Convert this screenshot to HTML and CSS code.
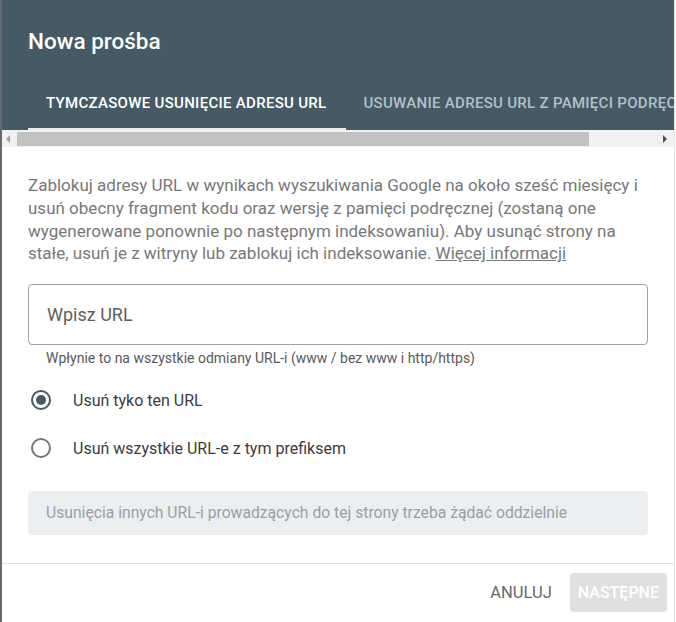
FILE: index.html
```html
<!DOCTYPE html>
<html lang="pl">
<head>
    <meta charset="UTF-8">
    <meta name="viewport" content="width=device-width, initial-scale=1.0">
    <title>Nowa prośba</title>
    <link rel="stylesheet" href="styles.css">
</head>
<body>

    <div class="dialog">
        <div class="header">
            <h1>Nowa prośba</h1>
            <div class="tabs">
                <div class="tab active">Tymczasowe usunięcie adresu URL</div>
                <div class="tab">Usuwanie adresu URL z pamięci podręcznej</div>
            </div>
        </div>

        <!-- horizontal scrollbar under the tabs -->
        <div class="scrollbar">
            <span class="arrow left"></span>
            <div class="track"><div class="thumb"></div></div>
            <span class="arrow right"></span>
        </div>

        <div class="content">
            <p class="intro">Zablokuj adresy URL w wynikach wyszukiwania Google na około sześć miesięcy i usuń obecny fragment kodu oraz wersję z pamięci podręcznej (zostaną one wygenerowane ponownie po następnym indeksowaniu). Aby usunąć strony na stałe, usuń je z witryny lub zablokuj ich indeksowanie. <a href="#">Więcej informacji</a></p>

            <div class="field">
                <input type="text" placeholder="Wpisz URL">
            </div>
            <div class="hint">Wpłynie to na wszystkie odmiany URL-i (www / bez www i http/https)</div>

            <div class="options">
                <label class="radio checked"><span class="circle"></span>Usuń tyko ten URL</label>
                <label class="radio"><span class="circle"></span>Usuń wszystkie URL-e z tym prefiksem</label>
            </div>

            <div class="note">Usunięcia innych URL-i prowadzących do tej strony trzeba żądać oddzielnie</div>
        </div>

        <div class="footer">
            <button class="cancel">Anuluj</button>
            <button class="next" disabled>Następne</button>
        </div>
    </div>

</body>
</html>
```

FILE: styles.css
```css
body {
    margin: 0;
    font-family: Roboto, "Noto Sans", sans-serif;
    background: #fff;
    overflow: hidden;
}
.dialog {
    height: 622px;
    border-left: 2px solid #65686e;
    border-right: 1px solid #e3e3e3;
    margin-right: 1px;
    display: flex;
    flex-direction: column;
    box-sizing: border-box;
}
.header {
    background: #455a64;
    color: #fff;
}
h1 {
    margin: 0;
    height: 80px;
    padding-left: 26px;
    font-size: 22.5px;
    font-weight: 500;
    line-height: 82px;
}
.tabs {
    display: flex;
    height: 50px;
    padding-left: 26px;
    overflow: hidden;
    white-space: nowrap;
}
.tab {
    flex: none;
    padding: 0 19px 0 18px;
    font-size: 15px;
    font-weight: 500;
    letter-spacing: 0.3px;
    text-transform: uppercase;
    line-height: 46px;
    color: #b4c0c6;
    border-bottom: 2px solid transparent;
}
.tab.active {
    color: #fff;
    border-bottom-color: #e8ecee;
}
.scrollbar {
    display: flex;
    align-items: center;
    height: 18px;
    background: #f1f1f1;
}
.arrow {
    width: 0;
    height: 0;
    border-top: 4px solid transparent;
    border-bottom: 4px solid transparent;
}
.arrow.left {
    border-right: 4px solid #a3a3a3;
    margin: 0 7px 0 4px;
}
.arrow.right {
    border-left: 4px solid #505050;
    margin: 0 7px 0 4px;
}
.track {
    flex: 1;
    height: 14px;
    margin-right: 2px;
}
.thumb {
    width: 572px;
    height: 100%;
    background: #c1c1c1;
}
.content {
    flex: 1;
    padding: 27px 26px 28px;
    border-bottom: 1px solid #e0e0e0;
}
.intro {
    margin: 0;
    font-size: 17px;
    line-height: 22.7px;
    color: #787878;
}
.intro a {
    color: #787878;
}
.field input {
    display: block;
    width: 100%;
    box-sizing: border-box;
    height: 61px;
    margin-top: 19px;
    padding: 0 18px;
    border: 1px solid #a0a0a0;
    border-radius: 4px;
    font-family: inherit;
    font-size: 18px;
    outline: none;
}
.field input::placeholder {
    color: #5f5f5f;
}
.hint {
    padding-left: 18px;
    margin-top: 4px;
    font-size: 14px;
    line-height: 18px;
    color: #5a5a5a;
}
.options {
    margin-top: 9px;
}
.radio {
    display: flex;
    align-items: center;
    height: 48px;
    font-size: 16px;
    color: #3c3c3c;
}
.circle {
    width: 16px;
    height: 16px;
    border: 2px solid #757575;
    border-radius: 50%;
    margin: 0 22px 0 3px;
    box-sizing: content-box;
    position: relative;
}
.radio.checked .circle {
    border-color: #455a64;
}
.radio.checked .circle::after {
    content: "";
    position: absolute;
    top: 3px;
    left: 3px;
    width: 10px;
    height: 10px;
    border-radius: 50%;
    background: #455a64;
}
.note {
    margin-top: 19px;
    height: 44px;
    line-height: 44px;
    padding-left: 18px;
    border-radius: 4px;
    background: #eceff1;
    font-size: 15.7px;
    color: #9a9fa3;
}
.footer {
    display: flex;
    justify-content: flex-end;
    gap: 10px;
    padding: 9px 7px 10px 0;
}
.footer button {
    height: 39px;
    border: none;
    border-radius: 4px;
    padding: 0 8px;
    font-family: inherit;
    font-size: 16px;
    font-weight: 500;
    text-transform: uppercase;
    cursor: pointer;
}
.footer .cancel {
    background: none;
    color: #686868;
    font-size: 16.5px;
    font-weight: 400;
}
.footer .next {
    background: #e0e0e0;
    color: #fff;
}
```
